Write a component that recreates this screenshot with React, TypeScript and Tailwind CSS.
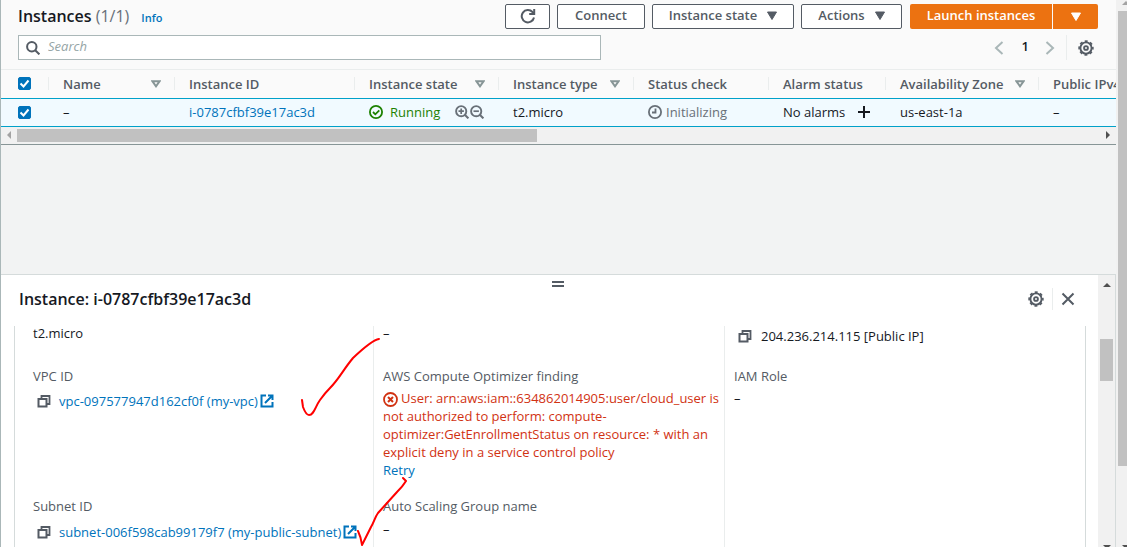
import React from "react";

const ICON = "shrink-0 fill-none";

function Refresh() {
  return (
    <svg viewBox="0 0 16 16" className={`${ICON} size-4 stroke-[#545b64] stroke-2`} aria-hidden="true">
      <path d="M14 9.5a6.200 6.200 0 1 1-1.500-5.500L14 5.500" />
      <path d="M14.200 1v5H9.200" />
    </svg>
  );
}

function Gear() {
  return (
    <svg viewBox="0 0 16 16" className={`${ICON} size-4 stroke-[#545b64]`} aria-hidden="true">
      <circle cx="8" cy="8" r="5.6" strokeWidth="1.9" />
      <circle cx="8" cy="8" r="6.9" strokeWidth="1.6" strokeDasharray="3 2.42" strokeDashoffset="1.5" />
      <circle cx="8" cy="8" r="1.900" strokeWidth="1.9" />
    </svg>
  );
}

function Caret({ className }: { className: string }) {
  return (
    <svg viewBox="0 0 10 9" className={`h-[9px] w-[10px] shrink-0 ${className}`} aria-hidden="true">
      <path d="M.5 1h9L5 8.5z" strokeWidth="1" strokeLinejoin="round" />
    </svg>
  );
}

function SortCaret() {
  return (
    <svg viewBox="0 0 10 8" className={`${ICON} h-2 w-[10px] stroke-[#879596]`} aria-hidden="true">
      <path d="M1.500 1.300h7L5 6.300z" strokeWidth="2" />
    </svg>
  );
}

function Copy() {
  return (
    <svg viewBox="0 0 14 14" className={`${ICON} size-[14px] stroke-[#545b64]`} aria-hidden="true">
      <path d="M4.500 4.500V2h8v8H9.500" strokeWidth="1.800" />
      <path d="M1.500 5h8v7.500h-8z" strokeWidth="2" />
    </svg>
  );
}

function External() {
  return (
    <svg viewBox="0 0 14 14" className={`${ICON} size-[14px] stroke-[#0073bb]`} aria-hidden="true">
      <path d="M6 1.500H1.500v11h11V8M8 1.500h4.500V6M12.500 1.500L5 9" strokeWidth="2" />
    </svg>
  );
}

function Magnifier({ plus }: { plus?: boolean }) {
  return (
    <svg viewBox="0 0 14 14" className={`${ICON} size-[14px] stroke-[#687078]`} aria-hidden="true">
      <circle cx="6.200" cy="6.200" r="5.100" strokeWidth="1.900" />
      <path d="M9.800 9.800l3.600 3.600" strokeWidth="2" />
      <path d={plus ? "M3.500 6.200h5.400M6.200 3.500v5.400" : "M3.500 6.200h5.400"} strokeWidth="1.700" />
    </svg>
  );
}

const BTN =
  "flex h-[25px] items-center justify-center gap-2.5 rounded-[2px] border border-[#545b64] bg-white pb-0.5 text-[13px] font-semibold text-[#545b64]";

const COLUMNS: { label: string; sort?: boolean }[] = [
  { label: "Name", sort: true },
  { label: "Instance ID" },
  { label: "Instance state", sort: true },
  { label: "Instance type", sort: true },
  { label: "Status check" },
  { label: "Alarm status" },
  { label: "Availability Zone", sort: true },
  { label: "Public IPv4" },
];

function Tick({ label }: { label: string }) {
  return (
    <span className="relative block size-[13px]">
      <input
        type="checkbox"
        defaultChecked
        aria-label={label}
        className="peer block size-[13px] appearance-none rounded-[2px] border border-[#879596] bg-white checked:border-[#0073bb] checked:bg-[#0073bb]"
      />
      <svg viewBox="0 0 13 13" className="pointer-events-none absolute inset-0 hidden fill-none stroke-white stroke-2 peer-checked:block" aria-hidden="true">
        <path d="M2.500 6.500l3 3 5-6" />
      </svg>
    </span>
  );
}

function Header() {
  return (
    <header className="bg-[#fafafa] pt-1 pr-[18px] pb-[9px] pl-[17px]">
      <div className="flex items-start gap-[7px]">
        <h1 className="mr-auto flex items-baseline gap-3 text-[16px] leading-6 font-semibold text-[#16191f]">
          <span>
            Instances <span className="font-normal text-[#687078]">(1/1)</span>
          </span>
          <a href="#info" className="text-[11px] font-semibold text-[#0073bb]">Info</a>
        </h1>
        <button type="button" aria-label="Refresh" className={`${BTN} w-[45px]`}>
          <Refresh />
        </button>
        <button type="button" className={`${BTN} w-[88px]`}>Connect</button>
        <button type="button" className={`${BTN} w-[142px]`}>
          Instance state <Caret className="fill-[#545b64] stroke-[#545b64]" />
        </button>
        <button type="button" className={`${BTN} w-[101px]`}>
          Actions <Caret className="fill-[#545b64] stroke-[#545b64]" />
        </button>
        <div className="ml-px flex gap-px">
          <button type="button" className="h-[25px] w-[142px] rounded-l-[2px] bg-[#ec7211] pb-0.5 text-[13px] font-semibold text-white">
            Launch instances
          </button>
          <button type="button" aria-label="More launch options" className="flex h-[25px] w-[45px] items-center justify-center rounded-r-[2px] bg-[#ec7211]">
            <Caret className="fill-white stroke-white" />
          </button>
        </div>
      </div>
      <div className="mt-[5px] flex items-center justify-between">
        <label className="flex h-[25px] w-[583px] items-center gap-2 border border-[#aab7b8] bg-white px-[7px]">
          <svg viewBox="0 0 14 14" className={`${ICON} size-[14px] stroke-[#545b64] stroke-2`} aria-hidden="true">
            <circle cx="5.800" cy="5.800" r="4.700" />
            <path d="M9.200 9.200l4.200 4.200" />
          </svg>
          <input type="search" aria-label="Search" placeholder="Search" className="min-w-0 flex-1 bg-transparent pb-0.5 text-[13px] outline-none placeholder:text-[#95a5a6] placeholder:italic" />
        </label>
        <nav aria-label="Pagination" className="flex h-[25px] items-center text-[13px] font-semibold text-[#16191f]">
          <button type="button" aria-label="Previous page" className="mr-[18px]">
            <svg viewBox="0 0 10 14" className={`${ICON} h-[14px] w-[10px] stroke-[#aab7b8] stroke-2`}>
              <path d="M8.500 1L2 7l6.500 6" />
            </svg>
          </button>
          <span className="pb-0.5">1</span>
          <button type="button" aria-label="Next page" className="ml-[16px]">
            <svg viewBox="0 0 10 14" className={`${ICON} h-[14px] w-[10px] stroke-[#aab7b8] stroke-2`}>
              <path d="M1.500 1L8 7l-6.500 6" />
            </svg>
          </button>
          <span className="ml-[11px] h-full border-l border-[#eaeded]" />
          <button type="button" aria-label="Preferences" className="mr-1 ml-[11px]">
            <Gear />
          </button>
        </nav>
      </div>
    </header>
  );
}

function InstancesTable() {
  return (
    <div className="overflow-hidden border-t border-[#eaeded]">
      <table className="w-[1240px] table-fixed border-collapse text-left text-[13px] leading-[18px] whitespace-nowrap text-[#16191f]">
        <colgroup>
          <col className="w-[47px]" />
          <col className="w-[126px]" />
          <col className="w-[180px]" />
          <col className="w-[144px]" />
          <col className="w-[135px]" />
          <col className="w-[135px]" />
          <col className="w-[117px]" />
          <col className="w-[153px]" />
          <col />
        </colgroup>
        <thead>
          <tr className="h-[28px] bg-[#fafafa] text-[#545b64]">
            <th className="p-0 pl-[17px]"><Tick label="Select all instances" /></th>
            {COLUMNS.map((c) => (
              <th key={c.label} scope="col" className="p-0 font-semibold">
                <div className="flex h-[13px] items-center justify-between border-l border-[#eaeded] pr-[13px] pl-3.5">
                  {c.label}
                  {c.sort && <SortCaret />}
                </div>
              </th>
            ))}
          </tr>
        </thead>
        <tbody>
          <tr className="h-[28px] border-y border-[#00a1c9] bg-[#f1faff]">
            <td className="pl-[17px]"><Tick label="Select instance i-0787cfbf39e17ac3d" /></td>
            <td className="pl-[15px]">–</td>
            <td className="pl-[15px]"><a href="#instance" className="text-[#0073bb]">i-0787cfbf39e17ac3d</a></td>
            <td className="pl-[15px]">
              <div className="flex items-center text-[#1d8102]">
                <svg viewBox="0 0 14 14" className={`${ICON} mr-[7px] size-[14px] stroke-[#1d8102]`} aria-hidden="true">
                  <circle cx="7" cy="7" r="6.100" strokeWidth="1.800" />
                  <path d="M4 7l2.300 2.300 4-4" strokeWidth="1.800" />
                </svg>
                Running
                <button type="button" aria-label="Include in filter" className="ml-[15px]"><Magnifier plus /></button>
                <button type="button" aria-label="Exclude from filter" className="ml-px"><Magnifier /></button>
              </div>
            </td>
            <td className="pl-[15px]">t2.micro</td>
            <td className="pl-[15px]">
              <div className="flex items-center gap-1 text-[#687078]">
                <svg viewBox="0 0 14 14" className={`${ICON} size-[14px] stroke-[#687078]`} aria-hidden="true">
                  <circle cx="7" cy="7" r="6.100" strokeWidth="1.800" />
                  <path d="M7.500 3.500v4H4" strokeWidth="1.800" />
                </svg>
                Initializing
              </div>
            </td>
            <td className="pl-[15px]">
              <div className="flex items-center gap-3">
                No alarms
                <button type="button" aria-label="Create alarm">
                  <svg viewBox="0 0 14 14" className={`${ICON} size-[14px] stroke-[#16191f] stroke-2`}><path d="M7 1v12M1 7h12" /></svg>
                </button>
              </div>
            </td>
            <td className="pl-[15px]">us-east-1a</td>
            <td className="pl-[15px]">–</td>
          </tr>
        </tbody>
      </table>
      <div className="flex h-[17px] items-center gap-1.5 bg-[#f1f1f1] px-1.5" aria-hidden="true">
        <svg viewBox="0 0 4 8" className="h-2 w-1 shrink-0 fill-[#a3a3a3]"><path d="M4 0v8L0 4z" /></svg>
        <div className="flex-1"><div className="h-[13px] w-[48%] bg-[#c1c1c1]" /></div>
        <svg viewBox="0 0 4 8" className="h-2 w-1 shrink-0 fill-[#505050]"><path d="M0 0v8l4-4z" /></svg>
      </div>
    </div>
  );
}

function ResourceLink({ id }: { id: string }) {
  return (
    <div className="flex items-center pl-1 text-[#0073bb]">
      <button type="button" aria-label={`Copy ${id}`} className="mr-2"><Copy /></button>
      <a href="#resource" className="flex items-center gap-0.5 whitespace-nowrap">{id} <External /></a>
    </div>
  );
}

const LABEL = "text-[#545b64]";
const CELL = "border-l border-[#eaeded] pl-[9px]";

function Details() {
  return (
    <section aria-label="Instance details" className="relative flex min-h-0 flex-1 border-t border-r border-[#d5dbdb] bg-white">
      <div className="flex min-w-0 flex-1 flex-col">
        <div className="flex shrink-0 justify-center pt-1.5 pl-4">
          <div className="h-[6px] w-3 border-y-2 border-[#545b64]" />
        </div>
        <div className="mb-[15px] flex h-6 shrink-0 items-center pr-[23px] pl-[18px]">
          <h2 className="mr-auto text-[16px] leading-6 font-semibold text-[#16191f]">Instance: i-0787cfbf39e17ac3d</h2>
          <button type="button" aria-label="Panel settings"><Gear /></button>
          <span className="mx-2 h-[22px] border-l border-[#eaeded]" />
          <button type="button" aria-label="Close panel">
            <svg viewBox="0 0 14 14" className={`${ICON} size-[14px] stroke-[#545b64] stroke-2`}><path d="M1.500 1.500l11 11M12.500 1.500l-11 11" /></svg>
          </button>
        </div>
        <div className="mr-3 ml-[13px] grid flex-1 grid-cols-[358px_351px_1fr] overflow-hidden border-x border-[#d5dbdb] text-[13px] leading-[18px] text-[#16191f]">
          <div className="pl-[18px]">
            <p className="h-[41px] leading-[14px]">t2.micro</p>
            <p className={LABEL}>VPC ID</p>
            <div className="mt-[7px] h-[105px]"><ResourceLink id="vpc-097577947d162cf0f (my-vpc)" /></div>
            <p className={LABEL}>Subnet ID</p>
            <div className="mt-2"><ResourceLink id="subnet-006f598cab99179f7 (my-public-subnet)" /></div>
          </div>
          <div className={CELL}>
            <p className="h-[41px] leading-[14px]">–</p>
            <p className={LABEL}>AWS Compute Optimizer finding</p>
            <div className="mt-1 h-[108px] text-[#d13212]">
              <svg viewBox="0 0 15 15" className={`${ICON} mr-[3px] inline size-[15px] stroke-[#d13212]`} aria-hidden="true">
                <circle cx="7.500" cy="7.500" r="6.500" strokeWidth="1.800" />
                <path d="M5 5l5 5M10 5l-5 5" strokeWidth="2" />
              </svg>
              <span className="whitespace-nowrap">User: arn:aws:iam::634862014905:user/cloud_user is</span><br />
              not authorized to perform: compute-<br />
              optimizer:GetEnrollmentStatus on resource: * with an explicit deny in a service control policy
              <a href="#retry" className="block w-fit text-[#0073bb]">Retry</a>
            </div>
            <p className={LABEL}>Auto Scaling Group name</p>
            <p className="mt-[5px]">–</p>
          </div>
          <div className={CELL}>
            <div className="flex h-[41px] items-start pt-px pl-1">
              <button type="button" aria-label="Copy public IP" className="mt-0.5 mr-[9px]"><Copy /></button>
              204.236.214.115 [Public IP]
            </div>
            <p className={LABEL}>IAM Role</p>
            <p className="mt-1">–</p>
          </div>
        </div>
      </div>
      <div className="flex w-[17px] flex-col items-center bg-[#f1f1f1] pt-2" aria-hidden="true">
        <svg viewBox="0 0 8 4" className="h-1 w-2 fill-[#505050]"><path d="M0 4h8L4 0z" /></svg>
        <div className="mt-[52px] h-[42px] w-[13px] bg-[#c1c1c1]" />
        <svg viewBox="0 0 8 4" className="mt-auto h-1 w-2 fill-[#505050]"><path d="M0 2h8L4 6z" /></svg>
      </div>
      <svg viewBox="0 0 120 222" className="pointer-events-none absolute top-[50px] left-[295px] h-[222px] w-[120px] fill-none stroke-[#f00] stroke-2" strokeLinecap="round" strokeLinejoin="round" aria-hidden="true">
        <path d="M83 14Q76 15 57 33C47 45 43 54 34 63Q29 68 24 75C19 82 18 90 13 90Q10 90 7 82L6 75" />
        <path d="M107 153l3 3Q107 161 101 167L82 188C79 192 78 197 75 202L66 220Q65 212 62 206" />
      </svg>
    </section>
  );
}

export default function App() {
  return (
    <div className="flex h-screen overflow-hidden bg-[#f2f3f3] font-['Open_Sans','Noto_Sans',sans-serif]">
      <main className="flex min-w-0 flex-1 flex-col border-l border-[#aab7b8]">
        <Header />
        <InstancesTable />
        <div className="h-[130px] shrink-0 border-t border-[#879596]" />
        <Details />
      </main>
      <div className="flex w-[11px] flex-col overflow-hidden bg-[#f1f1f1] pl-0.5" aria-hidden="true">
        <svg viewBox="0 0 8 4" className="mt-px ml-1 h-1 w-2 shrink-0 fill-[#a3a3a3]"><path d="M0 4h8L4 0z" /></svg>
        <div className="mt-1.5 h-[455px] bg-[#c1c1c1]" />
        <svg viewBox="0 0 8 4" className="mt-auto ml-1 h-1 w-2 shrink-0 fill-[#505050]"><path d="M0 2h8L4 6z" /></svg>
      </div>
    </div>
  );
}
